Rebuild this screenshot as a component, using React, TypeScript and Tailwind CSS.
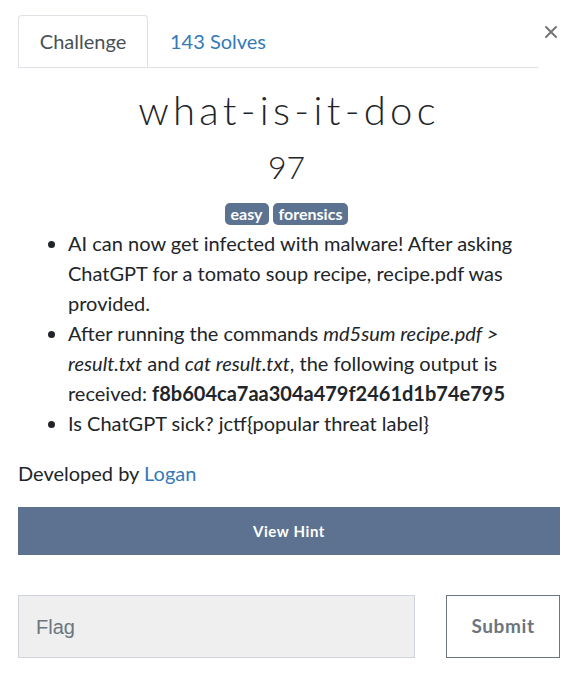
import { X } from 'lucide-react'

const lato = { fontFamily: 'Lato, "Open Sans", sans-serif' }

export default function App() {
  return (
    <div className="min-h-screen bg-white text-[#212529]" style={lato}>
      <div className="relative px-[18px] pt-[15px]">
        {/* ── Tabs ───────────────────────────── */}
        <div className="flex mr-[17px] border-b border-[#dee2e6]">
          <div className="-mb-px h-[52px] w-[130px] flex items-center justify-center rounded-t-[4px] border border-[#dee2e6] border-b-white bg-white text-[20px] text-[#495057]">
            Challenge
          </div>
          <div className="h-[52px] px-[22px] flex items-center text-[20px] text-[#337ab7]">143 Solves</div>
        </div>
        <button className="absolute right-[12px] top-[22px] text-[#777]">
          <X size={20} strokeWidth={2.5} />
        </button>

        {/* ── Header ─────────────────────────── */}
        <h2 className="mt-[18px] pl-[5px] text-center text-[40px] leading-[48px] tracking-[4.3px] font-light text-[#212529]">
          what-is-it-doc
        </h2>
        <h3 className="mt-[13px] text-center text-[32px] leading-[40px] font-light">97</h3>
        <div className="mt-[16px] flex justify-center gap-[4px]">
          <span className="rounded-[5px] bg-[#5b7290] px-[6px] text-[16px] leading-[22px] font-bold text-white">easy</span>
          <span className="rounded-[5px] bg-[#5b7290] px-[6px] text-[16px] leading-[22px] font-bold text-white">forensics</span>
        </div>

        {/* ── Description ────────────────────── */}
        <ul className="mt-[3px] list-disc pl-[50px] text-[20px] leading-[30px]">
          <li>AI can now get infected with malware! After asking ChatGPT for a tomato soup recipe, recipe.pdf was provided.</li>
          <li>
            After running the commands <em>md5sum recipe.pdf &gt; result.txt</em> and <em>cat result.txt</em>, the following
            output is received: <strong>f8b604ca7aa304a479f2461d1b74e795</strong>
          </li>
          <li>Is ChatGPT sick? jctf{'{'}popular threat label{'}'}</li>
        </ul>

        <p className="mt-[20px] text-[20px] leading-[30px]">
          Developed by <a className="text-[#337ab7]">Logan</a>
        </p>

        <button className="mt-[19px] h-[48px] w-[542px] bg-[#5c7290] text-[15px] font-bold tracking-[0.6px] text-white">
          View Hint
        </button>

        {/* ── Flag form ──────────────────────── */}
        <div className="mt-[40px] flex gap-[31px] w-[542px]">
          <div
            className="flex-1 h-[63px] border border-[#ced4da] bg-[#efefef] px-[17px] flex items-center text-[20px] text-[#6c757d]"
            style={{ fontFamily: '"Liberation Sans", Arial, sans-serif' }}
          >
            Flag
          </div>
          <button className="w-[114px] h-[63px] border border-[#6c757d] text-[19px] font-bold tracking-[0.6px] text-[#6c757d]">
            Submit
          </button>
        </div>
      </div>
    </div>
  )
}
